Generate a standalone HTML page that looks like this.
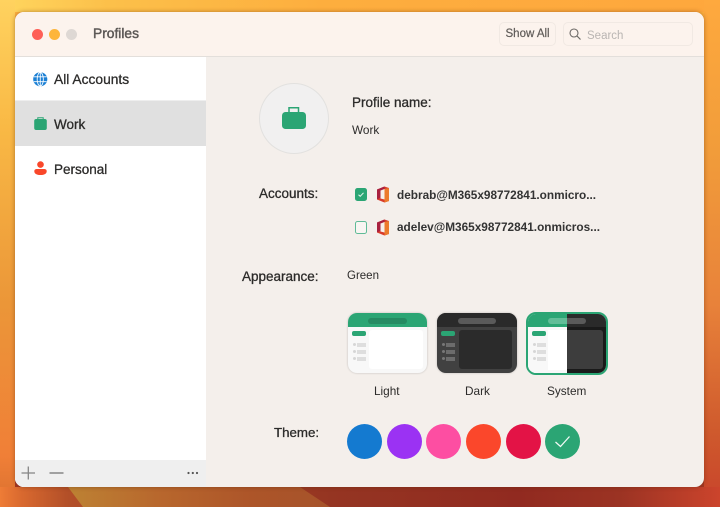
<!DOCTYPE html>
<html><head><meta charset="utf-8"><style>
*{box-sizing:border-box}
html,body{margin:0;padding:0}
body{width:720px;height:507px;overflow:hidden;position:relative;font-family:"Liberation Sans",sans-serif;color:#2c2b2a;
background:linear-gradient(180deg,#fdb03f 0%,#f9a83e 45%,#d8652f 78%,#a83c24 94%,#93291f 100%)}
.bgl{position:absolute;left:0;top:0;width:15px;height:507px;background:linear-gradient(180deg,#ffd25f 0,#f9b945 25%,#eb9638 60%,#f07f37 90%,#d9702f 100%)}
.bgr{position:absolute;left:704px;top:0;width:16px;height:507px;background:linear-gradient(180deg,#fea93e 0,#f19c3a 30%,#e8823a 60%,#cf5a2d 85%,#c8432b 100%)}
.bgt{position:absolute;left:0;top:0;width:720px;height:12px;background:linear-gradient(90deg,#ffd65f 0,#fcc04a 15%,#fdae3e 45%,#fea73d 100%)}
.win{position:absolute;left:15px;top:12px;width:689px;height:475px;border-radius:9px;overflow:hidden;background:#f4efeb}
.shadow{position:absolute;left:15px;top:12px;width:689px;height:475px;border-radius:9px;box-shadow:0 0 5px rgba(90,40,10,.45)}
.tb{position:absolute;left:0;top:0;width:689px;height:45px;background:#fcf3ed;border-bottom:1px solid #e3dfdb}
.dot{position:absolute;top:17px;width:11px;height:11px;border-radius:50%}
.t{position:absolute;white-space:nowrap;line-height:16px}
.m{-webkit-text-stroke:.3px #2c2b2a}
.side{position:absolute;left:0;top:45px;width:191px;height:430px;background:#fff}
.sel{position:absolute;left:0;top:44px;width:191px;height:45px;background:#e0e0e0}
.foot{position:absolute;left:0;top:403px;width:191px;height:27px;background:#efefef}
.btn{position:absolute;border:1px solid #f1e9e3;border-radius:5px;background:#fcf3ed}
.cb{position:absolute;left:340px;width:12px;height:13px;border-radius:2.5px}
.thumb{position:absolute;top:301px;width:80px;height:60px;border-radius:9px;overflow:hidden;box-shadow:0 0 2px rgba(0,0,0,.22)}
.c{position:absolute;top:412px;width:35px;height:35px;border-radius:50%}
.abs{position:absolute}
svg{position:absolute;display:block}
</style></head><body>
<div class="bgt"></div><div class="bgl"></div><div class="bgr"></div>
<svg style="left:0;top:487px" width="720" height="20" viewBox="0 0 720 20">
 <defs>
  <linearGradient id="g1" x1="0" x2="1" y1="0" y2="0"><stop offset="0" stop-color="#ee7c36"/><stop offset=".03" stop-color="#d9692f"/><stop offset=".095" stop-color="#b24f28"/><stop offset=".46" stop-color="#953522"/><stop offset=".72" stop-color="#912a20"/><stop offset=".86" stop-color="#9b3323"/><stop offset="1" stop-color="#cc442c"/></linearGradient>
  <linearGradient id="g2" x1="0" x2="1" y1="0" y2="0"><stop offset="0" stop-color="#bd8233"/><stop offset=".35" stop-color="#b8672d"/><stop offset=".7" stop-color="#ad5529"/><stop offset="1" stop-color="#a6532a"/></linearGradient>
 </defs>
 <rect width="720" height="20" fill="url(#g1)"/>
 <path d="M68 0L83 20H330L300 0Z" fill="url(#g2)"/>
</svg>
<div class="shadow"></div>
<div class="win">
 <div class="tb"></div>
 <div class="dot" style="left:17px;background:#fe5f57"></div>
 <div class="dot" style="left:34px;background:#fdb53b"></div>
 <div class="dot" style="left:51px;background:#ded8d4"></div>
 <div class="t" style="left:78px;top:14px;font-size:13.800px;color:#5c5856;-webkit-text-stroke:.45px #5c5856">Profiles</div>
 <div class="btn" style="left:484px;top:10px;width:57px;height:24px"></div>
 <div class="t" style="left:490.500px;top:14px;font-size:11.500px;color:#5f5b58;-webkit-text-stroke:.2px #5f5b58">Show All</div>
 <div class="btn" style="left:548px;top:10px;width:130px;height:24px"></div>
 <svg style="left:553px;top:15px" width="14" height="14" viewBox="0 0 14 14"><circle cx="6" cy="6" r="4" fill="none" stroke="#6c6966" stroke-width="1.100"/><path d="M9 9L12.500 12.500" stroke="#6c6966" stroke-width="1.200"/></svg>
 <div class="t" style="left:572px;top:16px;font-size:11.500px;color:#b9b5b2">Search</div>

 <div class="side">
  <div class="sel"></div>
  <div class="foot"></div>
  <div style="position:absolute;left:0;top:43px;width:191px;height:1px;background:#eeeeee"></div>
 </div>
 <svg style="left:18px;top:60px" width="14.500" height="14.500" viewBox="0 0 15 15"><circle cx="7.500" cy="7.500" r="7.300" fill="#1a7fd4"/><g fill="none" stroke="#fff" stroke-width=".9"><ellipse cx="7.500" cy="7.500" rx="3.200" ry="7"/><path d="M7.500 .5V14.500M.8 5H14.200M.8 10H14.200"/></g></svg>
 <div class="t m" style="left:39px;top:60px;font-size:13.800px">All Accounts</div>
 <svg style="left:19px;top:104px" width="13" height="14" viewBox="0 0 13 14"><rect x="0.200" y="3" width="12.600" height="11" rx="2" fill="#2ba574"/><path d="M3.800 3.500V1.800H9.200V3.500" fill="none" stroke="#2ba574" stroke-width="1"/></svg>
 <div class="t m" style="left:39px;top:105px;font-size:13.500px">Work</div>
 <svg style="left:19px;top:149px" width="13" height="15" viewBox="0 0 13 15"><circle cx="6.500" cy="3.600" r="3.300" fill="#f9472a"/><path d="M.3 10.200C.3 8.600 1.600 8 3 8H10C11.400 8 12.700 8.600 12.700 10.200C12.700 12.800 10 14 6.500 14S.3 12.800 .3 10.200Z" fill="#f9472a"/></svg>
 <div class="t m" style="left:39px;top:150px;font-size:13.500px">Personal</div>
 <svg style="left:6px;top:453px" width="16" height="16" viewBox="0 0 16 16"><path d="M.5 8H14M7.300 1.500V14.500" stroke="#858585" stroke-width="1.300"/></svg>
 <svg style="left:33px;top:453px" width="16" height="16" viewBox="0 0 16 16"><path d="M1.500 8H15.500" stroke="#858585" stroke-width="1.500"/></svg>
 <svg style="left:171px;top:458px" width="14" height="6" viewBox="0 0 14 6"><g fill="#555"><circle cx="2.500" cy="3" r="1.100"/><circle cx="6.800" cy="3" r="1.100"/><circle cx="11" cy="3" r="1.100"/></g></svg>

 <div class="abs" style="left:244px;top:71px;width:70px;height:71px;border-radius:50%;background:#f1f0f0;border:1px solid #e2e1df"></div>
 <svg style="left:266px;top:93px" width="26" height="25" viewBox="0 0 26 25"><rect x="1" y="7" width="24" height="17" rx="3.500" fill="#2ba574"/><path d="M8 7.500V2.700H17.500V7.500" fill="none" stroke="#2ba574" stroke-width="1.500"/></svg>
 <div class="t m" style="left:337px;top:83px;font-size:13.500px">Profile name:</div>
 <div class="t" style="left:337px;top:110px;font-size:11.800px">Work</div>

 <div class="t m" style="left:244px;top:174px;font-size:13.500px">Accounts:</div>
 <div class="cb" style="top:176px;background:#2ba574"></div>
 <svg style="left:340px;top:176px" width="12" height="13" viewBox="0 0 12 13"><path d="M3.500 6.700L5.200 8.300L8.500 4.800" fill="none" stroke="#e8f6ef" stroke-width="1"/></svg>
 <div class="cb" style="top:209px;border:1px solid #5fbb97;background:#f8f5f2"></div>
 <svg style="left:361px;top:174px" width="14" height="17" viewBox="0 0 14 17"><path d="M1 3.500L8.500 .5L13 2V15L8.500 16.500L1 13.500Z" fill="#d83b2a"/><path d="M1 3.500L8.500 .5V3L4.500 4.500V11.500L1 13.500Z" fill="#a8203f"/><path d="M8.500 3V16.500L13 15V2Z" fill="#ec7a2c"/><path d="M4.500 4.500L8.500 3V13.500L4.500 12.500Z" fill="#f6efeb"/></svg>
 <svg style="left:361px;top:207px" width="14" height="17" viewBox="0 0 14 17"><path d="M1 3.500L8.500 .5L13 2V15L8.500 16.500L1 13.500Z" fill="#d83b2a"/><path d="M1 3.500L8.500 .5V3L4.500 4.500V11.500L1 13.500Z" fill="#a8203f"/><path d="M8.500 3V16.500L13 15V2Z" fill="#ec7a2c"/><path d="M4.500 4.500L8.500 3V13.500L4.500 12.500Z" fill="#f6efeb"/></svg>
 <div class="t" style="left:382px;top:175px;font-size:11.800px;font-weight:700;color:#333">debrab@M365x98772841.onmicro...</div>
 <div class="t" style="left:382px;top:207px;font-size:11.800px;font-weight:700;color:#333">adelev@M365x98772841.onmicros...</div>

 <div class="t m" style="left:227px;top:257px;font-size:13.500px">Appearance:</div>
 <div class="t" style="left:332px;top:256px;font-size:11.500px">Green</div>

 <!-- Light -->
 <div class="thumb" style="left:333px;width:79px;background:#f8f8f8">
  <div class="abs" style="left:0;top:0;width:80px;height:14px;background:#2ba574"></div>
  <div class="abs" style="left:20px;top:5px;width:39px;height:6px;border-radius:3px;background:#258a62"></div>
  <div class="abs" style="left:21px;top:17px;width:54px;height:39px;border-radius:3px;background:#fff"></div>
  <div class="abs" style="left:4px;top:18px;width:14px;height:5px;border-radius:2px;background:#2ba574"></div>
  <div class="abs" style="left:5px;top:30px;width:3px;height:3px;border-radius:50%;background:#d6d6d6"></div><div class="abs" style="left:9px;top:30px;width:9px;height:4px;background:#dedede"></div>
  <div class="abs" style="left:5px;top:37px;width:3px;height:3px;border-radius:50%;background:#d6d6d6"></div><div class="abs" style="left:9px;top:37px;width:9px;height:4px;background:#dedede"></div>
  <div class="abs" style="left:5px;top:44px;width:3px;height:3px;border-radius:50%;background:#d6d6d6"></div><div class="abs" style="left:9px;top:44px;width:9px;height:4px;background:#dedede"></div>
 </div>
 <div class="t" style="left:359px;top:371px;font-size:11.800px">Light</div>
 <!-- Dark -->
 <div class="thumb" style="left:422px;background:#414141">
  <div class="abs" style="left:0;top:0;width:80px;height:14px;background:#2a2a2a"></div>
  <div class="abs" style="left:21px;top:5px;width:38px;height:6px;border-radius:3px;background:#5a5a5a"></div>
  <div class="abs" style="left:22px;top:17px;width:53px;height:39px;border-radius:3px;background:#2b2b2b"></div>
  <div class="abs" style="left:4px;top:18px;width:14px;height:5px;border-radius:2px;background:#2ba574"></div>
  <div class="abs" style="left:5px;top:30px;width:3px;height:3px;border-radius:50%;background:#777"></div><div class="abs" style="left:9px;top:30px;width:9px;height:4px;background:#6c6c6c"></div>
  <div class="abs" style="left:5px;top:37px;width:3px;height:3px;border-radius:50%;background:#777"></div><div class="abs" style="left:9px;top:37px;width:9px;height:4px;background:#6c6c6c"></div>
  <div class="abs" style="left:5px;top:44px;width:3px;height:3px;border-radius:50%;background:#777"></div><div class="abs" style="left:9px;top:44px;width:9px;height:4px;background:#6c6c6c"></div>
 </div>
 <div class="t" style="left:450px;top:371px;font-size:11.800px">Dark</div>
 <!-- System -->
 <div class="thumb" style="left:511px;width:82px;height:63px;top:300px;border:2px solid #2ba574;border-radius:10px;background:#fff;box-shadow:none">
  <div class="abs" style="left:0;top:0;width:39px;height:13px;background:#2ba574"></div>
  <div class="abs" style="left:39px;top:0;width:39px;height:13px;background:#2a2a2a"></div>
  <div class="abs" style="left:20px;top:4px;width:19px;height:6px;background:#62bd98;border-radius:3px 0 0 3px"></div>
  <div class="abs" style="left:39px;top:4px;width:19px;height:6px;background:#5a5a5a;border-radius:0 3px 3px 0"></div>
  <div class="abs" style="left:0;top:13px;width:39px;height:46px;background:#f8f8f8"></div>
  <div class="abs" style="left:20px;top:16px;width:19px;height:40px;background:#fff"></div>
  <div class="abs" style="left:39px;top:13px;width:39px;height:46px;background:#1a1a1a"></div>
  <div class="abs" style="left:39px;top:16px;width:36px;height:39px;border-radius:0 3px 3px 0;background:#3d3d3d"></div>
  <div class="abs" style="left:4px;top:17px;width:14px;height:5px;border-radius:2px;background:#2ba574"></div>
  <div class="abs" style="left:5px;top:29px;width:3px;height:3px;border-radius:50%;background:#d6d6d6"></div><div class="abs" style="left:9px;top:29px;width:9px;height:4px;background:#dedede"></div>
  <div class="abs" style="left:5px;top:36px;width:3px;height:3px;border-radius:50%;background:#d6d6d6"></div><div class="abs" style="left:9px;top:36px;width:9px;height:4px;background:#dedede"></div>
  <div class="abs" style="left:5px;top:43px;width:3px;height:3px;border-radius:50%;background:#d6d6d6"></div><div class="abs" style="left:9px;top:43px;width:9px;height:4px;background:#dedede"></div>
 </div>
 <div class="t" style="left:532px;top:371px;font-size:11.800px">System</div>

 <div class="t m" style="left:259px;top:413px;font-size:13.300px">Theme:</div>
 <div class="c" style="left:332px;background:#147ad0"></div>
 <div class="c" style="left:371.500px;background:#9b32f3"></div>
 <div class="c" style="left:411px;background:#fd4ea2"></div>
 <div class="c" style="left:451px;background:#fb472b"></div>
 <div class="c" style="left:490.500px;background:#e31346"></div>
 <div class="c" style="left:530px;background:#2ba574"></div>
 <svg style="left:530px;top:412px" width="35" height="35" viewBox="0 0 35 35"><path d="M10.500 18L15.500 22.500L24.500 12.500" fill="none" stroke="#f2faf6" stroke-width="1.300"/></svg>
</div>
</body></html>
